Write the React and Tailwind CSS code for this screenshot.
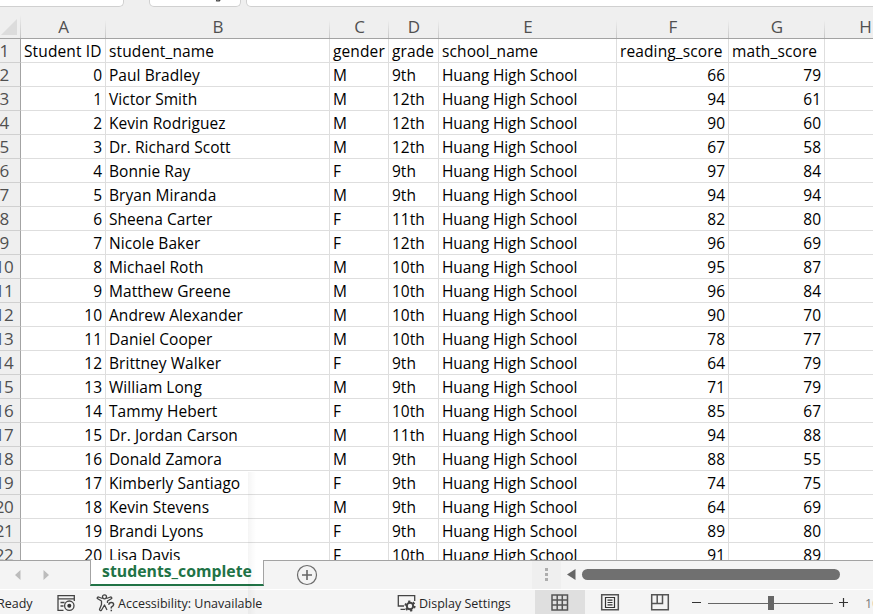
const COLS = [
  { l: 'A', w: 'w-[85px]', num: true },
  { l: 'B', w: 'w-[224px]', track: 'tracking-[0.05px]' },
  { l: 'C', w: 'w-[59px]' },
  { l: 'D', w: 'w-[50px]' },
  { l: 'E', w: 'w-[178px]', track: 'tracking-[-0.09px]' },
  { l: 'F', w: 'w-[112px]', num: true },
  { l: 'G', w: 'w-[96px]', num: true },
  { l: 'H', w: 'w-[81px]' },
];

const S = 'Huang High School';
const ROWS = [
  ['Student ID', 'student_name', 'gender', 'grade', 'school_name', 'reading_score', 'math_score', ''],
  ['0', 'Paul Bradley', 'M', '9th', S, '66', '79', ''],
  ['1', 'Victor Smith', 'M', '12th', S, '94', '61', ''],
  ['2', 'Kevin Rodriguez', 'M', '12th', S, '90', '60', ''],
  ['3', 'Dr. Richard Scott', 'M', '12th', S, '67', '58', ''],
  ['4', 'Bonnie Ray', 'F', '9th', S, '97', '84', ''],
  ['5', 'Bryan Miranda', 'M', '9th', S, '94', '94', ''],
  ['6', 'Sheena Carter', 'F', '11th', S, '82', '80', ''],
  ['7', 'Nicole Baker', 'F', '12th', S, '96', '69', ''],
  ['8', 'Michael Roth', 'M', '10th', S, '95', '87', ''],
  ['9', 'Matthew Greene', 'M', '10th', S, '96', '84', ''],
  ['10', 'Andrew Alexander', 'M', '10th', S, '90', '70', ''],
  ['11', 'Daniel Cooper', 'M', '10th', S, '78', '77', ''],
  ['12', 'Brittney Walker', 'F', '9th', S, '64', '79', ''],
  ['13', 'William Long', 'M', '9th', S, '71', '79', ''],
  ['14', 'Tammy Hebert', 'F', '10th', S, '85', '67', ''],
  ['15', 'Dr. Jordan Carson', 'M', '11th', S, '94', '88', ''],
  ['16', 'Donald Zamora', 'M', '9th', S, '88', '55', ''],
  ['17', 'Kimberly Santiago', 'F', '9th', S, '74', '75', ''],
  ['18', 'Kevin Stevens', 'M', '9th', S, '64', '69', ''],
  ['19', 'Brandi Lyons', 'F', '9th', S, '89', '80', ''],
  ['20', 'Lisa Davis', 'F', '10th', S, '91', '89', ''],
];

function FormulaBar() {
  return (
    <div className="flex h-[7px] shrink-0 overflow-hidden">
      <div className="-ml-2 h-[7px] w-[132px] shrink-0 rounded-b-[5px] border border-t-0 border-[#d0d0d0] bg-white" />
      <div className="ml-[25px] flex h-[7px] w-[92px] shrink-0 rounded-b-[5px] border border-t-0 border-[#d0d0d0] bg-white">
        <svg className="ml-[65px]" width="8" height="3" viewBox="0 0 8 3">
          <path d="M1 .5Q4 1.5 5 0" fill="none" stroke="#444" strokeWidth="1.4" />
        </svg>
      </div>
      <div className="ml-[5px] h-[7px] w-[640px] shrink-0 rounded-bl-[5px] border border-t-0 border-[#d0d0d0] bg-white" />
    </div>
  );
}

function Sheet() {
  return (
    <div className="h-[553px] shrink-0 overflow-hidden">
      <div className="flex h-8 w-[906px] border-b border-[#a3a3a3] bg-[#efefef] text-[17px] text-[#505050]">
        <div className="flex w-[21px] shrink-0 items-end">
          <svg className="mb-[3px] ml-px" width="16" height="16" viewBox="0 0 16 16">
            <path d="M16 0V16H0Z" fill="#dcdcdc" />
          </svg>
          <div className="ml-[3px] h-[23px] w-px bg-linear-to-b from-[#efefef] to-[#c4c4c4]" />
        </div>
        {COLS.map((c) => (
          <div key={c.l} className={`flex shrink-0 items-end ${c.w}`}>
            <div className="flex-1 pl-px text-center leading-[23px]">{c.l}</div>
            <div className="h-[18px] w-px bg-linear-to-b from-[#efefef] to-[#c8c8c8]" />
          </div>
        ))}
      </div>
      {ROWS.map((r, i) => (
        <div key={i} className="flex h-6 w-[906px]">
          <div className="w-[21px] shrink-0 border-r border-b border-r-[#a3a3a3] border-b-[#d0d0d0] bg-[#efefef]">
            <div className="-ml-[13px] w-[34px] text-center text-[17px] leading-[24px] tracking-[-0.5px] text-[#505050]">{i + 1}</div>
          </div>
          {r.map((t, j) => (
            <div
              key={j}
              className={`shrink-0 border-r border-b border-[#dedede] bg-white px-[3px] text-[15.5px] leading-[25px] whitespace-nowrap text-black ${COLS[j].w} ${COLS[j].num && i > 0 ? 'text-right' : ''} ${i === 0 ? 'tracking-[0.12px]' : COLS[j].track || ''}`}
            >
              {t}
            </div>
          ))}
        </div>
      ))}
    </div>
  );
}

function TabBar() {
  return (
    <div className="flex h-[29px] shrink-0 bg-[#f4f4f4]">
      <div className="flex h-[29px] w-[90px] shrink-0 border-t border-[#a3a3a3]">
        <svg width="90" height="28" viewBox="0 0 90 28">
          <path d="M20.500 9v10L15 14ZM43.500 9v10L49 14Z" fill="#bcbcbc" />
        </svg>
      </div>
      <div className="h-[26px] w-[174px] shrink-0 border-x border-b-2 border-x-[#a3a3a3] border-b-[#217346] bg-white text-center text-[15.8px] leading-[23px] font-bold text-[#217346]">
        students_complete
      </div>
      <div className="flex h-[29px] flex-1 border-t border-[#a3a3a3]">
        <svg width="609" height="28" viewBox="0 0 609 28">
          <rect x="268" y="0" width="29" height="28" fill="#efefef" />
          <circle cx="43" cy="14" r="9.500" fill="none" stroke="#6b6b6b" strokeWidth="1.2" />
          <path d="M43 9v10M38 14h10" stroke="#666" strokeWidth="1.6" />
          <path d="M281 7h3v3h-3zM281 12h3v3h-3zM281 17h3v3h-3z" fill="#adadad" />
          <path d="M311.500 8v11L303 13.500Z" fill="#666" />
          <rect x="318" y="8" width="258" height="11" rx="5.500" fill="#707070" />
        </svg>
      </div>
    </div>
  );
}

function StatusBar() {
  return (
    <div className="flex h-[25px] shrink-0 items-center overflow-hidden border-t border-[#fff] bg-[#f4f4f4] text-[12.5px] whitespace-nowrap text-[#262626]">
      <span className="-ml-[3px] w-[60px] shrink-0 pt-[3px] leading-5">Ready</span>
      <svg className="mt-[2px] shrink-0" width="18" height="18" viewBox="0 0 18 18" fill="none" stroke="#444" strokeWidth="1.3">
        <path d="M6.500 16.300H1V1.700H17.300V7M1 4.800H17.300M3.500 8.500h4M3.500 12h3" />
        <circle cx="12.300" cy="11.700" r="4.700" />
        <circle cx="12.300" cy="11.700" r="2" fill="#333" stroke="none" />
      </svg>
      <svg className="mt-[2px] ml-[21px] shrink-0" width="20" height="18" viewBox="0 0 20 18" fill="none" stroke="#444" strokeWidth="1.3" strokeLinejoin="round">
        <circle cx="8.500" cy="2.800" r="2" />
        <path d="M6.500 4.500 2.500 3Q1 3 1.300 4.500L5.500 7V10.500L3.500 15.500Q4 17 5.300 16.500L8.500 11 11 16M10.500 4.500 14.500 3Q16 3 15.700 4.500L11.500 7V9" />
        <path d="M12.800 10.800Q12.900 8.500 15.300 8.500T17.600 10.800Q17.600 12 15.300 13.200V14.500M15.300 15.700v1.500" strokeWidth="1.5" />
      </svg>
      <span className="ml-[2px] w-[279px] shrink-0 pt-[3px] leading-5">Accessibility: Unavailable</span>
      <svg className="mt-[2px] shrink-0" width="20" height="18" viewBox="0 0 20 18" fill="none" stroke="#444" strokeWidth="1.3">
        <path d="M17.700 7V1.700H1.300V12H7M3.500 15.300H8" />
        <circle cx="13" cy="12" r="3.200" strokeWidth="2" />
        <circle cx="13" cy="12" r="4.700" strokeWidth="1.800" strokeDasharray="2.200 2.720" />
      </svg>
      <span className="ml-[2px] w-[116px] shrink-0 pt-[3px] leading-5">Display Settings</span>
      <div className="flex h-6 w-[50px] shrink-0 items-center justify-center bg-[#dfdfdf]">
        <svg width="18" height="17" viewBox="0 0 18 17" fill="none" stroke="#555" strokeWidth="1.5">
          <path d="M1 1H16.500V16H1ZM6.200 1V16M11.300 1V16M1 6H16.500M1 11H16.500" />
        </svg>
      </div>
      <svg className="shrink-0" width="288" height="24" viewBox="0 0 288 24" fill="none" stroke="#555">
        <path d="M16.700 4.700H33.300V19.800H16.700Z" strokeWidth="1.500" />
        <path d="M20.500 7.500H29.500V17.500H20.500ZM22.500 10.200h5M22.500 12.500h5M22.500 14.800h5" stroke="#333" strokeWidth="1.2" />
        <path d="M66.700 4.700H83.300V19.800H66.700ZM67 13.500H77.500V5M72.200 5V13" strokeWidth="1.5" />
        <path d="M107 12.500h9M254 12.500h9M258.500 8v9" stroke="#333" strokeWidth="1.200" />
        <path d="M123 13.500H248" stroke="#666" />
        <rect x="183" y="6" width="6" height="14" fill="#666" stroke="none" />
        <text x="280" y="18" fontSize="12.500" fill="#777" stroke="none">100%</text>
      </svg>
    </div>
  );
}

export default function App() {
  return (
    <div className="relative flex h-[614px] w-[873px] flex-col overflow-hidden bg-[#efefef] font-['Open_Sans','Noto_Sans',sans-serif]">
      <FormulaBar />
      <Sheet />
      <TabBar />
      <StatusBar />
      <div className="pointer-events-none absolute top-[472px] left-[248px] h-[142px] w-[8px] bg-linear-to-r from-black/4 to-transparent" />
    </div>
  );
}
